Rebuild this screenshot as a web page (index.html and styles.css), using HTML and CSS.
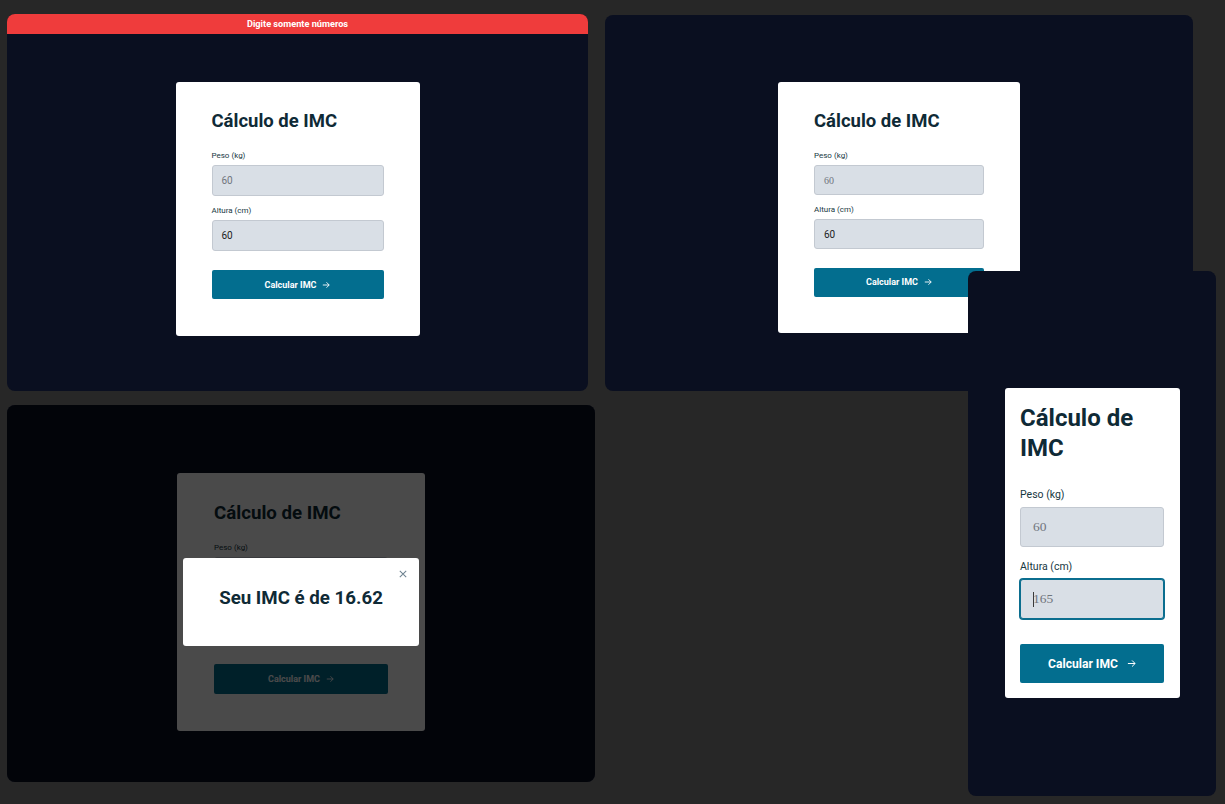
FILE: index.html
```html
<!DOCTYPE html>
<html lang="pt-BR">
<head>
<meta charset="utf-8">
<title>Cálculo de IMC</title>
<link rel="stylesheet" href="styles.css">
</head>
<body>
<div class="desktop">

  <section class="win win-1">
    <div class="toast">Digite somente números</div>
    <div class="stage stage-1">
      <div class="card card-a">
        <h1 class="card-title">Cálculo de IMC</h1>
        <div class="field-label first">Peso (kg)</div>
        <div class="field"><span class="val muted">60</span></div>
        <div class="field-label">Altura (cm)</div>
        <div class="field"><span class="val">60</span></div>
        <div class="btn">Calcular IMC <svg class="arrow" viewBox="0 0 10 10"><path d="M1 5h8M5.6 1.6 9 5l-3.4 3.4"/></svg></div>
      </div>
    </div>
  </section>

  <section class="win win-2">
    <div class="stage stage-2">
      <div class="card card-b">
        <h1 class="card-title">Cálculo de IMC</h1>
        <div class="field-label first">Peso (kg)</div>
        <div class="field"><span class="val muted serif">60</span></div>
        <div class="field-label">Altura (cm)</div>
        <div class="field"><span class="val">60</span></div>
        <div class="btn">Calcular IMC <svg class="arrow" viewBox="0 0 10 10"><path d="M1 5h8M5.6 1.6 9 5l-3.4 3.4"/></svg></div>
      </div>
    </div>
  </section>

  <section class="win win-3">
    <div class="stage stage-3">
      <div class="card card-c">
        <h1 class="card-title">Cálculo de IMC</h1>
        <div class="field-label first">Peso (kg)</div>
        <div class="field"><span class="val muted">60</span></div>
        <div class="field-label">Altura (cm)</div>
        <div class="field"><span class="val">165</span></div>
        <div class="btn">Calcular IMC <svg class="arrow" viewBox="0 0 10 10"><path d="M1 5h8M5.6 1.6 9 5l-3.4 3.4"/></svg></div>
      </div>
    </div>
    <div class="backdrop">
      <div class="modal">
        <svg class="close" viewBox="0 0 10 10"><path d="M1 1l8 8M9 1 1 9"/></svg>
        <p class="modal-text">Seu IMC é de 16.62</p>
      </div>
    </div>
  </section>

  <section class="win win-4">
    <div class="stage stage-4">
      <div class="card card-d">
        <h1 class="card-title">Cálculo de IMC</h1>
        <div class="field-label first">Peso (kg)</div>
        <div class="field"><span class="val muted serif">60</span></div>
        <div class="field-label">Altura (cm)</div>
        <div class="field focus"><span class="caret"></span><span class="val muted serif">165</span></div>
        <div class="btn">Calcular IMC <svg class="arrow" viewBox="0 0 10 10"><path d="M1 5h8M5.6 1.6 9 5l-3.4 3.4"/></svg></div>
      </div>
    </div>
  </section>

</div>
</body>
</html>
```

FILE: styles.css
```css
html, body {
  margin: 0;
  padding: 0;
}

body {
  background: #272727;
  font-family: Roboto, "Liberation Sans", Arial, sans-serif;
}

.desktop {
  position: relative;
  width: 1225px;
  height: 804px;
  overflow: hidden;
  background: #272727;
}

/* windows placed on the desktop canvas */
.win {
  position: absolute;
  background: #0a0f20;
  border-radius: 8px;
  overflow: hidden;
  box-sizing: border-box;
}

.win-1 { left: 7px;   top: 14px;  width: 581px; height: 377px; }
.win-2 { left: 605px; top: 15px;  width: 588px; height: 376px; }
.win-3 { left: 7px;   top: 405px; width: 588px; height: 377px; }
.win-4 { left: 968px; top: 271px; width: 248px; height: 525px; z-index: 2; }

.toast {
  height: 20px;
  line-height: 20px;
  background: #ef3c3c;
  color: #fff;
  font-size: 9.2px;
  font-weight: 700;
  text-align: center;
}

.stage {
  display: flex;
  justify-content: center;
  align-items: flex-start;
}

.stage-1 { padding-top: 48px; }
.stage-2 { padding-top: 67px; }
.stage-3 { padding-top: 68px; }
.stage-4 { padding-top: 117px; }

/* card */
.card {
  --w: 244px;
  --pt: 27px;
  --px: 36px;
  --pb: 37px;
  --ts: 18.5px;
  --tlh: 24px;
  --ls: 8px;
  --llh: 10px;
  --lm1: 18px;
  --lm: 10px;
  --fh: 31px;
  --fm: 4px;
  --fs: 10px;
  --fp: 9px;
  --bh: 29px;
  --bm: 19px;
  --bs: 9px;
  --ag: 6px;
  --aw: 8px;

  width: var(--w);
  box-sizing: border-box;
  padding: var(--pt) var(--px) var(--pb);
  background: #fff;
  border-radius: 3px;
  display: flex;
  flex-direction: column;
}

.card-b {
  --w: 242px;
  --lm1: 17.5px;
  --fm: 4.5px;
  --fh: 30px;
  --lm: 9.5px;
  --bm: 18.5px;
  --pb: 36px;
}

.card-c {
  --w: 248px;
  --pt: 28px;
  --px: 37px;
  --ts: 18.7px;
  --fh: 32px;
  --bh: 30px;
}

.card-d {
  --w: 175px;
  --pt: 15px;
  --px: 15.5px;
  --pb: 15px;
  --ts: 24px;
  --tlh: 30px;
  --ls: 10.5px;
  --llh: 13px;
  --lm1: 25px;
  --lm: 13px;
  --fh: 40px;
  --fm: 6px;
  --fs: 13.5px;
  --fp: 12px;
  --bh: 39px;
  --bm: 25px;
  --bs: 12.1px;
  --ag: 9px;
  --aw: 9px;
}

.card-title {
  margin: 0;
  font-size: var(--ts);
  line-height: var(--tlh);
  font-weight: 700;
  color: #0f2a36;
}

.field-label {
  margin-top: var(--lm);
  font-size: var(--ls);
  line-height: var(--llh);
  color: #17383f;
}

.field-label.first {
  margin-top: var(--lm1);
}

.field {
  margin-top: var(--fm);
  height: var(--fh);
  box-sizing: border-box;
  background: #d9dfe6;
  border: 1px solid #c3c9d1;
  border-radius: 3px;
  display: flex;
  align-items: center;
  padding-left: var(--fp);
  font-size: var(--fs);
  color: #1c1c1c;
}

.field.focus {
  border: 1px solid #0b6e8f;
  box-shadow: 0 0 0 1px #0b6e8f;
}

.val.muted {
  color: #70757d;
}

.val.serif {
  font-family: "Liberation Serif", "Times New Roman", serif;
}

.caret {
  width: 1px;
  height: 15px;
  background: #3a3a3a;
  margin-right: -1px;
}

.btn {
  margin-top: var(--bm);
  height: var(--bh);
  background: #036e8f;
  border-radius: 2px;
  color: #fff;
  font-size: var(--bs);
  font-weight: 700;
  display: flex;
  align-items: center;
  justify-content: center;
  gap: var(--ag);
}

.arrow {
  width: var(--aw);
  height: var(--aw);
  fill: none;
  stroke: currentColor;
  stroke-width: 1.1;
}

/* modal state */
.backdrop {
  position: absolute;
  inset: 0;
  background: rgba(0, 0, 0, 0.71);
  display: flex;
  justify-content: center;
  align-items: flex-start;
  padding-top: 153px;
  box-sizing: border-box;
}

.modal {
  position: relative;
  width: 236px;
  height: 88px;
  box-sizing: border-box;
  background: #fff;
  border-radius: 3px;
  padding-top: 28px;
  text-align: center;
}

.modal-text {
  margin: 0;
  font-size: 18.7px;
  line-height: 24px;
  font-weight: 700;
  color: #0f2a36;
}

.close {
  position: absolute;
  top: 12px;
  right: 12px;
  width: 8px;
  height: 8px;
  fill: none;
  stroke: #6e8290;
  stroke-width: 1.3;
}
```
